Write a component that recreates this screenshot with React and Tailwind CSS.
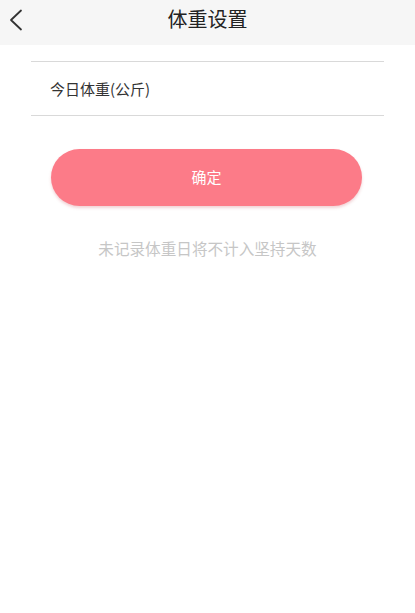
export default function App() {
  const font = { fontFamily: '"Noto Sans CJK SC", "Noto Sans", sans-serif' };
  return (
    <div className="w-[415px] h-[613px] bg-white flex flex-col" style={font}>
      <div className="h-[45px] bg-[#f6f6f6] relative flex items-center justify-center">
        <svg className="absolute left-[8px] top-[9px]" width="16" height="22" viewBox="0 0 16 22" fill="none">
          <path d="M13 1.5 L3 11 L13 20.5" stroke="#333" strokeWidth="1.8" strokeLinecap="round" strokeLinejoin="round" />
        </svg>
        <span className="text-[20px] leading-none text-[#222] -mt-[7px]">体重设置</span>
      </div>
      <div className="mx-[31px] mt-[16px] border-t border-[#d9d9d9]" />
      <div className="mx-[31px] h-[54px] flex items-center pl-[19px] border-b border-[#d9d9d9]">
        <span className="text-[15px] text-[#333] leading-none">今日体重(公斤)</span>
      </div>
      <div className="px-[51px] pt-[33px] pr-[53px]">
        <button className="w-full h-[57px] rounded-full bg-[#fc7b88] text-white text-[15px] flex items-center justify-center shadow-[0_2px_3px_rgba(200,80,90,0.25)]">
          确定
        </button>
      </div>
      <div className="mt-[35px] text-center text-[15.6px] leading-none text-[#c6c6c6]">
        未记录体重日将不计入坚持天数
      </div>
    </div>
  );
}
